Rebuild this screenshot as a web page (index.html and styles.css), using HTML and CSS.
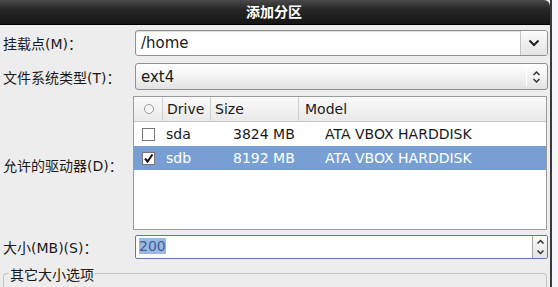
FILE: index.html
```html
<!DOCTYPE html>
<html lang="zh-CN">
<head>
    <meta charset="UTF-8">
    <title>添加分区</title>
    <link rel="stylesheet" href="styles.css">
</head>
<body>
    <div class="dialog">
        <div class="titlebar">添加分区</div>
        <div class="content">
            <div class="row row-mount">
                <label class="label">挂载点(M)：</label>
                <div class="combo-entry">
                    <div class="entry-text">/home</div>
                    <div class="combo-btn">
                        <svg width="12" height="8" viewBox="0 0 12 8"><path d="M1.5 1.5 L6 6 L10.5 1.5" fill="none" stroke="#222" stroke-width="2"/></svg>
                    </div>
                </div>
            </div>
            <div class="row row-fs">
                <label class="label">文件系统类型(T)：</label>
                <div class="combo-box">
                    <span class="combo-text">ext4</span>
                    <span class="combo-sep"></span>
                    <svg class="updown" width="9" height="14" viewBox="0 0 9 14"><path d="M1.5 5 L4.5 2 L7.5 5 M1.5 9 L4.5 12 L7.5 9" fill="none" stroke="#333" stroke-width="1.5"/></svg>
                </div>
            </div>
            <div class="row row-drives">
                <label class="label">允许的驱动器(D)：</label>
                <div class="tree">
                    <div class="tree-head">
                        <div class="th th-check"><span class="radio"></span></div>
                        <div class="th th-drive">Drive</div>
                        <div class="th th-size">Size</div>
                        <div class="th th-model">Model</div>
                    </div>
                    <div class="tree-row">
                        <span class="cb"></span>
                        <span class="td-drive">sda</span>
                        <span class="td-size">3824 MB</span>
                        <span class="td-model">ATA VBOX HARDDISK</span>
                    </div>
                    <div class="tree-row selected">
                        <span class="cb checked">
                            <svg width="11" height="11" viewBox="0 0 11 11"><path d="M2 5.5 L4.5 8.5 L9.5 1.5" fill="none" stroke="#111" stroke-width="2"/></svg>
                        </span>
                        <span class="td-drive">sdb</span>
                        <span class="td-size">8192 MB</span>
                        <span class="td-model">ATA VBOX HARDDISK</span>
                    </div>
                </div>
            </div>
            <div class="row row-size">
                <label class="label">大小(MB)(S)：</label>
                <div class="spin">
                    <div class="spin-text"><span class="sel">200</span></div>
                    <div class="spin-btns">
                        <svg width="9" height="6" viewBox="0 0 9 6"><path d="M1.5 4.5 L4.5 1.5 L7.5 4.5" fill="none" stroke="#333" stroke-width="1.5"/></svg>
                        <svg width="9" height="6" viewBox="0 0 9 6"><path d="M1.5 1.5 L4.5 4.5 L7.5 1.5" fill="none" stroke="#333" stroke-width="1.5"/></svg>
                    </div>
                </div>
            </div>
            <div class="frame">
                <span class="frame-label">其它大小选项</span>
            </div>
        </div>
    </div>
</body>
</html>
```

FILE: styles.css
```css
* {
    box-sizing: border-box;
    margin: 0;
    padding: 0;
}

body {
    background: #f4f6f9;
    font-family: "DejaVu Sans", "Noto Sans CJK SC", sans-serif;
    font-size: 14px;
    color: #1a1a1a;
    overflow: hidden;
}

.dialog {
    width: 552px;
    height: 287px;
    background: #ededed;
    border-right: 2px solid #3a3a3a;
    display: flex;
    flex-direction: column;
}

.titlebar {
    height: 25px;
    background: linear-gradient(#4a4a4a, #262626 40%, #161616);
    border-top-right-radius: 6px;
    color: #fff;
    font-weight: bold;
    font-size: 14px;
    line-height: 25px;
    text-align: center;
    padding-right: 2px;
    border-bottom: 1px solid #000;
}

.content {
    padding: 4px 2px 0 3px;
    display: flex;
    flex-direction: column;
}

.row {
    display: flex;
    align-items: center;
}

.label {
    width: 132px;
    flex: none;
    font-size: 14px;
}

.row-mount {
    height: 27px;
}

.row-fs {
    height: 27px;
    margin-top: 7px;
}

.row-drives {
    margin-top: 6px;
}

.row-drives .label {
    width: 130px;
    margin-top: 4px;
}

.row-size {
    margin-top: 5px;
    height: 24px;
}

.combo-entry {
    flex: 1;
    height: 26px;
    display: flex;
    border: 1px solid #8f8f8f;
    border-radius: 3px;
    background: #fff;
    box-shadow: inset 0 1px 1px rgba(0, 0, 0, 0.15);
}

.entry-text {
    flex: 1;
    padding: 3px 5px;
    font-size: 15px;
}

.combo-btn {
    width: 27px;
    border-left: 1px solid #c4c4c4;
    background: linear-gradient(#fbfbfb, #e4e4e4);
    border-radius: 0 2px 2px 0;
    display: flex;
    align-items: center;
    justify-content: center;
}

.combo-box {
    flex: 1;
    height: 27px;
    display: flex;
    align-items: center;
    border: 1px solid #8f8f8f;
    border-radius: 3px;
    background: linear-gradient(#ffffff, #f3f3f3 50%, #e2e2e2);
}

.combo-text {
    flex: 1;
    padding-left: 5px;
    font-size: 15px;
}

.combo-sep {
    width: 1px;
    height: 19px;
    background: #c0c0c0;
    border-right: 1px solid #fff;
    margin-right: 5px;
}

.updown {
    margin-right: 6px;
}

.tree {
    flex: 1;
    height: 134px;
    background: #fff;
    border: 1px solid #9a9a9a;
    margin-right: 1px;
}

.tree-head {
    height: 25px;
    display: flex;
    background: linear-gradient(#fafafa, #e9e9e9);
    border-bottom: 1px solid #c8c8c8;
}

.th {
    display: flex;
    align-items: center;
    border-right: 1px solid #d0d0d0;
    padding-left: 4px;
}

.th-check {
    width: 29px;
    justify-content: center;
    padding-left: 1px;
}

.th-drive {
    width: 48px;
}

.th-size {
    width: 88px;
}

.th-model {
    flex: 1;
    border-right: none;
    padding-left: 6px;
}

.radio {
    width: 10px;
    height: 10px;
    border: 1px solid #9a9a9a;
    border-radius: 50%;
    background: #f6f6f6;
}

.tree-row {
    height: 24px;
    display: flex;
    align-items: center;
}

.tree-row.selected {
    background: #789fd3;
    color: #fff;
}

.cb {
    width: 13px;
    height: 13px;
    margin-left: 8px;
    margin-right: 11px;
    border: 1px solid #777;
    background: #fff;
    display: flex;
    align-items: center;
    justify-content: center;
}

.td-drive {
    width: 67px;
}

.td-size {
    width: 92px;
}

.spin {
    flex: 1;
    height: 24px;
    display: flex;
    border: 1px solid #5a7bb0;
    border-radius: 2px;
    background: #fff;
}

.spin-text {
    flex: 1;
    padding: 2px 3px;
    font-size: 14px;
}

.sel {
    background: #9bb8e0;
    color: #3c5f96;
}

.spin-btns {
    width: 15px;
    display: flex;
    flex-direction: column;
    align-items: center;
    justify-content: space-evenly;
    background: linear-gradient(#fafafa, #e3e3e3);
    border-left: 1px solid #a8a8a8;
}

.frame {
    margin-top: 14px;
    height: 20px;
    border: 1px solid #c4c4c4;
    border-bottom: none;
    border-radius: 4px 4px 0 0;
    margin-right: 1px;
    position: relative;
}

.frame-label {
    position: absolute;
    left: 5px;
    top: -10px;
    background: #ededed;
    padding: 0 1px;
    font-size: 14px;
}
```
